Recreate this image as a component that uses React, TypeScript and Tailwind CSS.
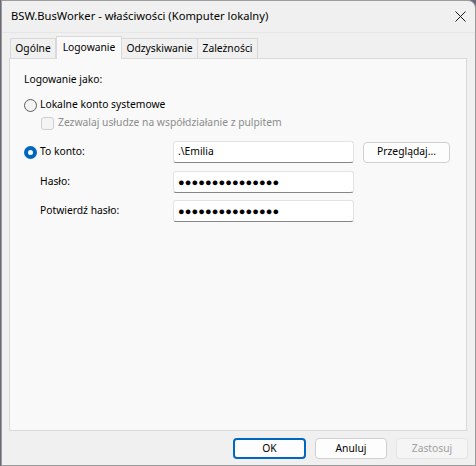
import React from "react";

const font = { fontFamily: '"Segoe UI", "Noto Sans", "Liberation Sans", sans-serif' };

function Radio({ checked }: { checked?: boolean }) {
  return checked ? (
    <span className="box-border inline-flex h-[13px] w-[13px] shrink-0 items-center justify-center rounded-full bg-[#0067c0]">
      <span className="h-[5px] w-[5px] rounded-full bg-white" />
    </span>
  ) : (
    <span className="box-border inline-block h-[13px] w-[13px] shrink-0 rounded-full border border-[#5d5d5d] bg-[#f4f4f4]" />
  );
}

function Field({ value, dots }: { value: string; dots?: boolean }) {
  return (
    <div className="box-border flex h-[22px] w-[181px] items-center rounded-[3px] border border-[#e3e3e3] border-b-[#868686] bg-white px-[4px] text-[10.3px] text-black">
      {dots ? <span className="text-[11px] tracking-[0.1px]">{value}</span> : value}
    </div>
  );
}

function Btn({
  label,
  primary,
  disabled,
  className = "",
}: {
  label: string;
  primary?: boolean;
  disabled?: boolean;
  className?: string;
}) {
  return (
    <div
      className={
        "box-border flex h-[21px] items-center justify-center rounded-[4px] text-[10.3px] " +
        (primary
          ? "border-2 border-[#0067c0] bg-[#fdfdfd] text-black "
          : disabled
          ? "border border-[#e5e5e5] bg-[#f5f5f5] text-[#a0a0a0] "
          : "border border-[#d0d0d0] bg-[#fdfdfd] text-black ") +
        className
      }
    >
      {label}
    </div>
  );
}

export default function App() {
  const tabs = [
    { t: "Ogólne", w: "w-[46px]" },
    { t: "Logowanie", w: "w-[66px]" },
    { t: "Odzyskiwanie", w: "w-[76px]" },
    { t: "Zależności", w: "w-[60px]" },
  ];
  return (
    <div className="flex h-[466px] w-[476px] bg-[#6c6a78]" style={font}>
      <div className="ml-[1px] box-border flex h-[466px] w-[475px] flex-col rounded-tr-[8px] border border-[#9c9c9c] bg-[#f0f0f0]">
        {/* title bar */}
        <div className="flex h-[31px] items-center justify-between pl-[9px] pr-[8px] text-[11.2px] text-black">
          <span>BSW.BusWorker - właściwości (Komputer lokalny)</span>
          <svg width="11" height="11" viewBox="0 0 11 11" className="mr-[1px]">
            <path d="M0.5 0.5 L10.5 10.5 M10.5 0.5 L0.5 10.5" stroke="#1a1a1a" strokeWidth="1" />
          </svg>
        </div>
        <div className="h-[1px] bg-[#e6e6e6]" />

        {/* tabs */}
        <div className="ml-[8px] mt-[5px] flex h-[20px] items-end">
          {tabs.map(({ t, w }, i) =>
            i === 1 ? (
              <div
                key={t}
                className={
                  "relative z-10 -mb-[1px] box-border flex h-[23px] items-start justify-center border border-b-0 border-[#d9d9d9] bg-[#f9f9f9] pt-[3px] text-[10.3px] text-black " +
                  w
                }
              >
                {t}
              </div>
            ) : (
              <div
                key={t}
                className={
                  "box-border flex h-[20px] items-center justify-center border border-b-0 border-[#d9d9d9] bg-[#f0f0f0] pt-[1px] text-[10.3px] text-black " +
                  w +
                  (i === 0 ? "" : " border-l-0")
                }
              >
                {t}
              </div>
            )
          )}
        </div>

        {/* panel */}
        <div className="ml-[7px] box-border flex h-[373px] w-[458px] flex-col border border-[#d9d9d9] bg-[#f9f9f9] pl-[14px] pt-[12px] text-[10.3px] text-black">
          <div className="leading-[16px]">Logowanie jako:</div>

          <div className="mt-[10px] flex h-[16px] items-center gap-[3px]">
            <Radio />
            <span>Lokalne konto systemowe</span>
          </div>
          <div className="ml-[17px] mt-[2px] flex h-[16px] items-center gap-[4px] text-[#8c8c8c]">
            <span className="box-border inline-block h-[13px] w-[13px] rounded-[3px] border border-[#cfcfcf] bg-[#f4f4f4]" />
            <span>Zezwalaj usłudze na współdziałanie z pulpitem</span>
          </div>

          <div className="mt-[10px] flex items-center">
            <div className="flex w-[149px] items-center gap-[3px]">
              <Radio checked />
              <span>To konto:</span>
            </div>
            <Field value=".\Emilia" />
            <Btn label="Przeglądaj..." className="ml-[9px] w-[87px]" />
          </div>

          <div className="mt-[8px] flex items-center">
            <div className="w-[149px] pl-[16px]">Hasło:</div>
            <Field value="●●●●●●●●●●●●●●●" dots />
          </div>

          <div className="mt-[7px] flex items-center">
            <div className="w-[149px] pl-[16px]">Potwierdź hasło:</div>
            <Field value="●●●●●●●●●●●●●●●" dots />
          </div>
        </div>

        {/* dialog buttons */}
        <div className="mr-[7px] mt-[7px] flex justify-end gap-[9px]">
          <Btn label="OK" primary className="w-[73px]" />
          <Btn label="Anuluj" className="w-[72px]" />
          <Btn label="Zastosuj" disabled className="w-[72px]" />
        </div>
      </div>
    </div>
  );
}
